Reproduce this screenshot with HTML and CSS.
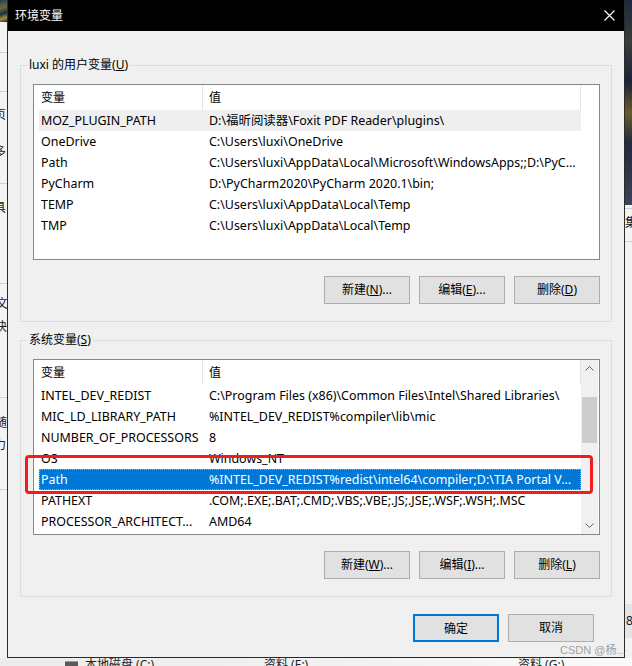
FILE: index.html
```html
<!DOCTYPE html>
<html lang="zh-CN">
<head>
<meta charset="utf-8">
<title>环境变量</title>
<link rel="stylesheet" href="styles.css">
</head>
<body>
<div class="desktop">
  <div class="bg-left">
    <div class="bg-img"></div>
    <div class="bg-line l1"></div>
    <div class="bg-line l2"></div>
    <div class="bg-line l3"></div>
    <div class="bg-line l4"></div>
    <div class="bg-line l5"></div>
    <div class="bg-line l6"></div>
    <span class="frag f1">页</span>
    <span class="frag f2">多</span>
    <span class="frag f3">具</span>
    <span class="frag f4">文</span>
    <span class="frag f5">快</span>
    <span class="frag f6">随</span>
    <span class="frag f7">力</span>
  </div>
  <div class="bg-right">
    <div class="bg-img tall"></div>
    <span class="frag r1">集</span>
    <div class="bg-line r-l1"></div>
    <div class="bg-line r-l2"></div>
    <div class="bg-box"></div>
    <span class="frag r2">8</span>
  </div>
  <div class="bg-bottom">
    <span class="drive"></span>
    <span class="btxt b1">本地磁盘 (C:)</span>
    <span class="btxt b2">资料 (E:)</span>
    <span class="btxt b3">资料 (G:)</span>
  </div>

  <div class="window">
    <div class="titlebar">
      <span class="title">环境变量</span>
      <svg class="close" width="11" height="11" viewBox="0 0 11 11"><path d="M0.5 0.5L10.5 10.5M10.5 0.5L0.5 10.5" stroke="#fff" stroke-width="1.1" fill="none"/></svg>
    </div>
    <div class="client">
      <div class="group">
        <span class="legend">luxi 的用户变量(<u>U</u>)</span>
        <div class="lv">
          <div class="lv-main">
            <div class="lv-head">
              <div class="hcol c1">变量</div>
              <div class="hcol c2">值</div>
            </div>
            <div class="row hot"><div class="cell c1">MOZ_PLUGIN_PATH</div><div class="cell c2">D:\福昕阅读器\Foxit PDF Reader\plugins\</div></div>
            <div class="row"><div class="cell c1">OneDrive</div><div class="cell c2">C:\Users\luxi\OneDrive</div></div>
            <div class="row"><div class="cell c1">Path</div><div class="cell c2">C:\Users\luxi\AppData\Local\Microsoft\WindowsApps;;D:\PyC...</div></div>
            <div class="row"><div class="cell c1">PyCharm</div><div class="cell c2">D:\PyCharm2020\PyCharm 2020.1\bin;</div></div>
            <div class="row"><div class="cell c1">TEMP</div><div class="cell c2">C:\Users\luxi\AppData\Local\Temp</div></div>
            <div class="row"><div class="cell c1">TMP</div><div class="cell c2">C:\Users\luxi\AppData\Local\Temp</div></div>
          </div>
        </div>
        <div class="btns">
          <button class="btn">新建(<u>N</u>)...</button>
          <button class="btn">编辑(<u>E</u>)...</button>
          <button class="btn">删除(<u>D</u>)</button>
        </div>
      </div>

      <div class="group second">
        <span class="legend">系统变量(<u>S</u>)</span>
        <div class="lv">
          <div class="lv-main">
            <div class="lv-head">
              <div class="hcol c1">变量</div>
              <div class="hcol c2">值</div>
            </div>
            <div class="row"><div class="cell c1">INTEL_DEV_REDIST</div><div class="cell c2">C:\Program Files (x86)\Common Files\Intel\Shared Libraries\</div></div>
            <div class="row"><div class="cell c1">MIC_LD_LIBRARY_PATH</div><div class="cell c2">%INTEL_DEV_REDIST%compiler\lib\mic</div></div>
            <div class="row"><div class="cell c1">NUMBER_OF_PROCESSORS</div><div class="cell c2">8</div></div>
            <div class="row"><div class="cell c1">OS</div><div class="cell c2">Windows_NT</div></div>
            <div class="row sel"><div class="cell c1">Path</div><div class="cell c2">%INTEL_DEV_REDIST%redist\intel64\compiler;D:\TIA Portal V...</div></div>
            <div class="row"><div class="cell c1">PATHEXT</div><div class="cell c2">.COM;.EXE;.BAT;.CMD;.VBS;.VBE;.JS;.JSE;.WSF;.WSH;.MSC</div></div>
            <div class="row"><div class="cell c1">PROCESSOR_ARCHITECT...</div><div class="cell c2">AMD64</div></div>
          </div>
          <div class="sb">
            <div class="sb-btn"><svg width="9" height="5" viewBox="0 0 9 5"><path d="M0.5 4.5L4.5 0.5L8.5 4.5" stroke="#606060" fill="none"/></svg></div>
            <div class="sb-track"><div class="sb-thumb"></div></div>
            <div class="sb-btn"><svg width="9" height="5" viewBox="0 0 9 5"><path d="M0.5 0.5L4.5 4.5L8.5 0.5" stroke="#606060" fill="none"/></svg></div>
          </div>
        </div>
        <div class="btns">
          <button class="btn">新建(<u>W</u>)...</button>
          <button class="btn">编辑(<u>I</u>)...</button>
          <button class="btn">删除(<u>L</u>)</button>
        </div>
      </div>

      <div class="dlg-btns">
        <button class="btn default">确定</button>
        <button class="btn">取消</button>
      </div>
    </div>
  </div>

  <div class="annot"></div>
  <div class="wm">CSDN @杨...</div>
</div>
</body>
</html>
```
FILE: styles.css
```css
html, body {
  margin: 0;
  padding: 0;
}
body {
  width: 632px;
  height: 666px;
  overflow: hidden;
  background: #f4f4f4;
  font-family: "Noto Sans", "Noto Sans CJK SC", sans-serif;
  font-size: 12px;
  color: #000;
}
.desktop {
  position: relative;
  width: 632px;
  height: 666px;
  overflow: hidden;
}

/* background desktop fragments */
.bg-left {
  position: absolute;
  left: 0;
  top: 0;
  width: 7px;
  height: 666px;
  background: #f3f3f3;
  overflow: hidden;
}
.bg-right {
  position: absolute;
  left: 625px;
  top: 0;
  width: 7px;
  height: 666px;
  background: #f3f3f3;
  overflow: hidden;
}
.bg-img {
  height: 22px;
  background: linear-gradient(160deg, #2a3b55 0%, #6b6a3c 35%, #1f2c44 60%, #a58f3a 80%, #1b2538 100%);
}
.bg-img.tall {
  height: 205px;
  background: linear-gradient(180deg, #1d2740 0%, #3a3d3a 20%, #1a2338 40%, #6a5a2a 55%, #202a40 70%, #3b4458 100%);
}
.bg-line {
  position: absolute;
  left: 0;
  width: 7px;
  height: 1px;
  background: #d2d2d2;
}
.l1 { top: 52px; }
.l2 { top: 91px; }
.l3 { top: 183px; }
.l4 { top: 283px; }
.l5 { top: 397px; }
.l6 { top: 489px; }
.r-l1 { top: 208px; }
.r-l2 { top: 241px; }
.bg-box {
  position: absolute;
  left: 0;
  top: 604px;
  width: 7px;
  height: 34px;
  background: #e4e4e4;
}
.frag {
  position: absolute;
  font-size: 12px;
  line-height: 14px;
  color: #222;
}
.f1 { left: -6px; top: 108px; }
.f2 { left: -6px; top: 145px; }
.f3 { left: -6px; top: 201px; }
.f4 { left: -4px; top: 297px; }
.f5 { left: -5px; top: 320px; }
.f6 { left: -5px; top: 416px; }
.f7 { left: -6px; top: 438px; }
.r1 { left: 0; top: 216px; }
.r2 { left: 1px; top: 614px; }

.bg-bottom {
  position: absolute;
  left: 0;
  top: 658px;
  width: 632px;
  height: 8px;
  background: linear-gradient(90deg, #ececec 0%, #f2f2f2 60%, #fafafa 100%);
  overflow: hidden;
}
.drive {
  position: absolute;
  left: 65px;
  top: 3px;
  width: 13px;
  height: 6px;
  background: #5a5a5a;
  border-top: 1px solid #9a9a9a;
}
.btxt {
  position: absolute;
  top: 0;
  font-size: 12px;
  line-height: 14px;
  color: #222;
  white-space: nowrap;
}
.b1 { left: 85px; }
.b2 { left: 264px; }
.b3 { left: 518px; }

/* window */
.window {
  position: relative;
  z-index: 1;
  margin-left: 7px;
  width: 618px;
  height: 658px;
  box-sizing: border-box;
  border: 1px solid #2a2a2a;
  border-top: none;
  background: #f0f0f0;
  display: flex;
  flex-direction: column;
}
.titlebar {
  height: 31px;
  flex: none;
  background: #000;
  color: #fff;
  display: flex;
  align-items: center;
  justify-content: space-between;
  padding: 0 9px 0 7px;
}
.title {
  font-size: 12px;
  line-height: 16px;
}
.close {
  display: block;
}
.client {
  flex: 1;
  padding: 34px 12px 0 12px;
}

/* group box */
.group {
  position: relative;
  border: 1px solid #dcdcdc;
  padding: 18px 11px 17px 12px;
}
.group.second {
  margin-top: 18px;
}
.legend {
  position: absolute;
  top: -9px;
  left: 6px;
  padding: 0 2px;
  background: #f0f0f0;
  line-height: 16px;
  white-space: nowrap;
}

/* list view */
.lv {
  height: 176px;
  box-sizing: border-box;
  border: 1px solid #828790;
  background: #fff;
  display: flex;
}
.lv-main {
  width: 547px;
  flex: none;
}
.lv-head {
  display: flex;
  height: 25px;
}
.hcol {
  box-sizing: border-box;
  height: 25px;
  line-height: 25px;
  border-right: 1px solid #e5e5e5;
  white-space: nowrap;
}
.hcol.c1 {
  width: 169px;
  padding-left: 7px;
}
.hcol.c2 {
  width: 378px;
  padding-left: 6px;
}
.row {
  display: flex;
  height: 21px;
  line-height: 21px;
  margin-left: 5px;
  width: 542px;
  box-sizing: border-box;
  white-space: nowrap;
  font-size: 12.45px;
}
.row.hot {
  background: #efefef;
}
.row.sel {
  background: #0078d7;
  color: #fff;
  outline: 1px dotted #e0a060;
  outline-offset: -1px;
}
.cell {
  box-sizing: border-box;
  overflow: hidden;
}
.cell.c1 {
  width: 164px;
  padding-left: 2px;
}
.cell.c2 {
  flex: 1;
  padding-left: 6px;
}

/* scrollbar */
.sb {
  width: 17px;
  flex: none;
  background: #f0f0f0;
  display: flex;
  flex-direction: column;
}
.sb-btn {
  height: 17px;
  flex: none;
  display: flex;
  align-items: center;
  justify-content: center;
}
.sb-btn svg {
  display: block;
}
.sb-track {
  flex: 1;
  padding-top: 20px;
}
.sb-thumb {
  height: 46px;
  margin: 0 1px;
  background: #cdcdcd;
}

/* buttons */
.btns {
  display: flex;
  justify-content: flex-end;
  gap: 9px;
  margin-top: 16px;
}
.btn {
  width: 86px;
  height: 28px;
  box-sizing: border-box;
  border: 1px solid #adadad;
  background: #e1e1e1;
  font-family: inherit;
  font-size: 12px;
  color: #000;
  padding: 0;
  margin: 0;
  line-height: 26px;
}
.btn.default {
  border: 2px solid #0078d7;
}
.dlg-btns {
  display: flex;
  justify-content: flex-end;
  gap: 9px;
  margin-top: 17px;
  padding-right: 18px;
}

/* overlays */
.annot {
  position: absolute;
  z-index: 5;
  left: 25px;
  top: 455px;
  width: 568px;
  height: 39px;
  box-sizing: border-box;
  border: 3px solid #f11d1d;
  border-radius: 4px;
}
.wm {
  position: absolute;
  z-index: 5;
  left: 560px;
  top: 643px;
  font-family: "Liberation Sans", "Noto Sans CJK SC", sans-serif;
  font-size: 11px;
  line-height: 14px;
  color: rgba(130, 130, 130, 0.75);
  white-space: nowrap;
}
```
